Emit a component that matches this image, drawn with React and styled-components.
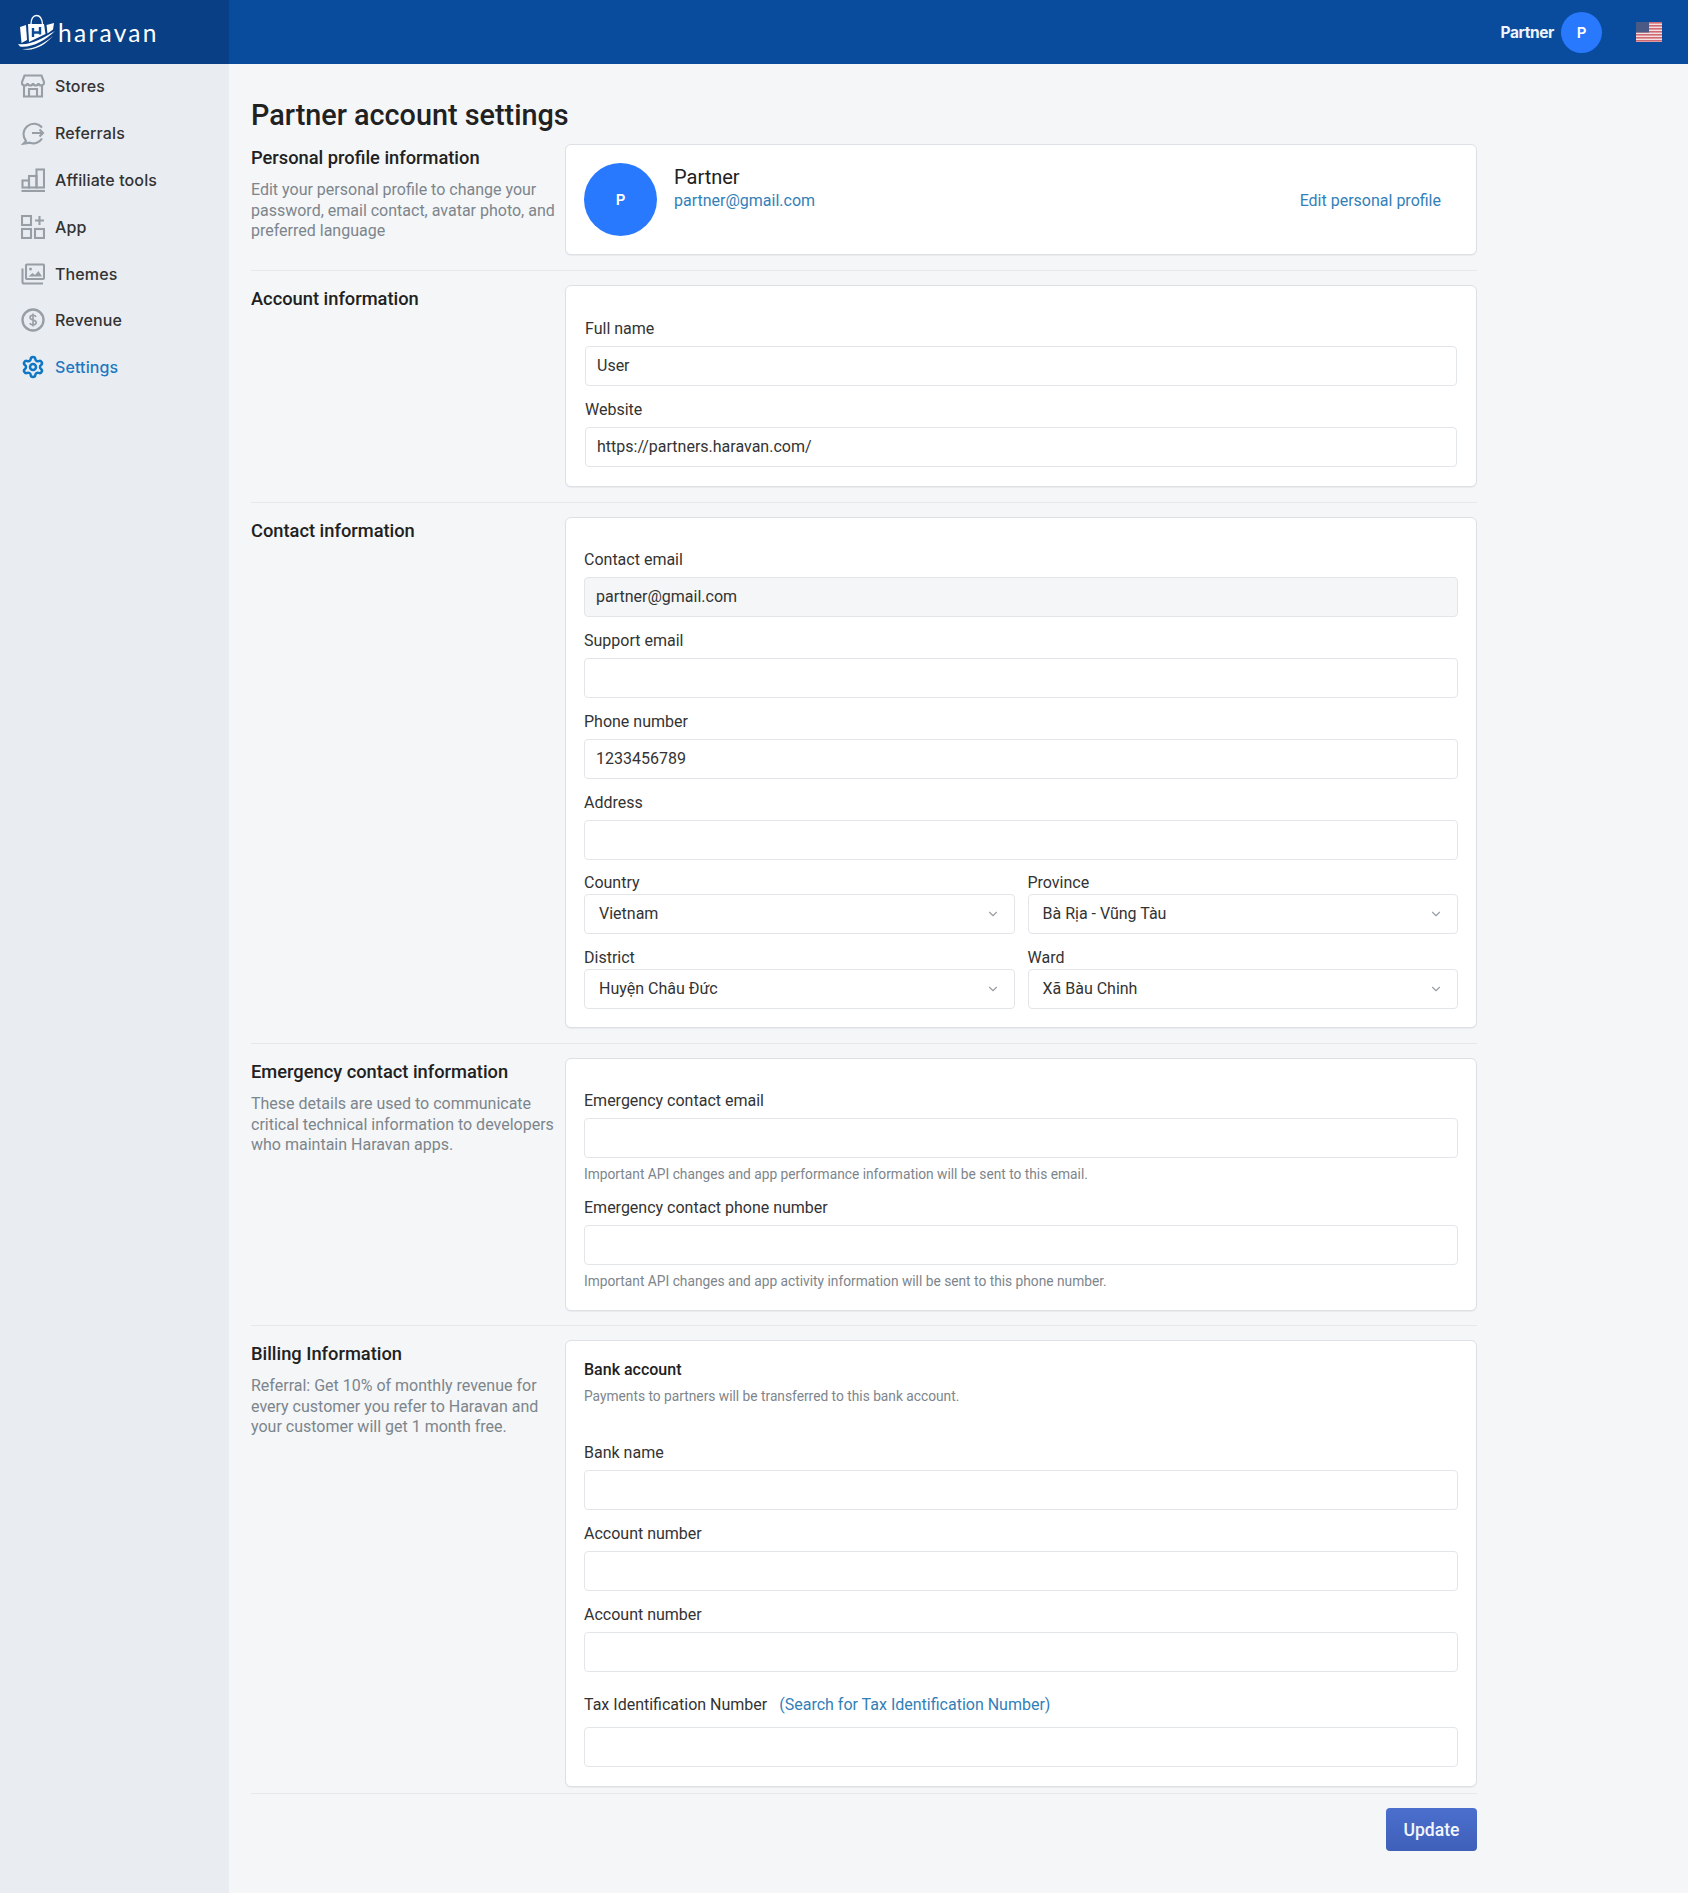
import React from "react";
import styled, { createGlobalStyle } from "styled-components";
import { ChevronDown, Settings } from "lucide-react";

const GlobalStyle = createGlobalStyle`
  html, body { margin: 0; padding: 0; background: #f4f6f8; }
  body { font-family: Roboto, "Liberation Sans", sans-serif; color: #333; }
  * { box-sizing: border-box; }
`;

const Page = styled.div`
  display: grid;
  grid-template-columns: 229px 1fr;
  grid-template-rows: 64px 1fr;
  width: 1688px;
  min-height: 1893px;
`;

const LogoBar = styled.div`
  background: #083f85;
  display: flex;
  align-items: center;
  padding-left: 17px;
  gap: 3px;
`;

const LogoText = styled.span`
  font-family: Lato, sans-serif;
  font-size: 24.5px;
  font-weight: 400;
  letter-spacing: 2.3px;
  color: #fff;
`;

const TopBar = styled.header`
  background: #094c9e;
  display: flex;
  align-items: center;
  justify-content: flex-end;
  padding-right: 26px;
`;

const TopName = styled.span`
  font-family: Inter, sans-serif;
  font-size: 15.5px;
  font-weight: 700;
  letter-spacing: -0.4px;
  color: #eef4fb;
  margin-right: 7px;
`;

const Avatar = styled.div`
  width: ${(p) => p.$size}px;
  height: ${(p) => p.$size}px;
  border-radius: 50%;
  background: #2979ff;
  color: #fff;
  flex: none;
  display: flex;
  align-items: center;
  justify-content: center;
  font-family: Inter, sans-serif;
  font-weight: 600;
  font-size: 15px;
`;

const Flag = styled.svg`
  margin-left: 34px;
  display: block;
`;

const Sidebar = styled.nav`
  background: #e9edf2;
`;

const NavItem = styled.a`
  display: flex;
  align-items: center;
  height: 46.8px;
  padding: 0 0 2px 21px;
  gap: 10px;
  font-family: Inter, sans-serif;
  font-size: 16px;
  font-weight: 500;
  letter-spacing: 0.12px;
  color: ${(p) => (p.$active ? "#1f78c1" : "#333")};
  svg { flex: none; color: ${(p) => (p.$active ? "#0f77c4" : "#979ea6")}; }
`;

const Main = styled.main`
  padding: 32px 0 0 22px;
  width: 1248px;
`;

const Title = styled.h1`
  margin: 0 0 10px;
  font-size: 28.8px;
  line-height: 38px;
  font-weight: 500;
  color: #212121;
`;

const Section = styled.section`
  display: grid;
  grid-template-columns: 314px 912px;
  padding-bottom: ${(p) => p.$pb ?? 15}px;
  margin-bottom: 14px;
  border-bottom: 1px solid #e6e9ec;
`;

const SectionInfo = styled.div`
  padding-top: 2px;
`;

const SectionTitle = styled.h2`
  margin: 0 0 10px;
  font-size: 18.3px;
  line-height: 24px;
  font-weight: 500;
  color: #212121;
`;

const SectionDesc = styled.p`
  margin: 0;
  font-size: 16px;
  line-height: 20.5px;
  color: #7d858c;
`;

const Card = styled.div`
  background: #fff;
  border: 1px solid #dde1e5;
  border-radius: 6px;
  padding: ${(p) => p.$pad ?? "30px 18px 20px 18px"};
  box-shadow: 0 1px 1px rgba(0, 0, 0, 0.05);
`;

const ProfileCard = styled(Card)`
  display: flex;
  align-items: center;
  height: 111px;
  padding: 0 35px 0 18px;
`;

const ProfileText = styled.div`
  margin-left: 17px;
  flex: 1;
  display: flex;
  flex-direction: column;
  padding-bottom: 23px;
`;

const ProfileName = styled.div`
  font-size: 20px;
  line-height: 25px;
  color: #212121;
`;

const LinkText = styled.a`
  font-size: 16px;
  line-height: 21px;
  color: #3380b8;
`;

const EditLink = styled(LinkText)`
  padding-top: 2px;
`;

const Field = styled.div`
  margin-bottom: ${(p) => p.$mb ?? 12}px;
  &:last-child { margin-bottom: 0; }
`;

const Label = styled.label`
  display: block;
  font-size: 16px;
  line-height: 21px;
  padding-top: 1px;
  margin-bottom: ${(p) => p.$mb ?? 7}px;
  color: #333;
`;

const SelectLabel = styled(Label)`
  padding-top: 0;
  margin-bottom: 1px;
`;

const Input = styled.input`
  display: block;
  width: 100%;
  height: 40px;
  padding: 0 11px 2px;
  font: 16px Roboto, sans-serif;
  color: #333;
  background: ${(p) => (p.readOnly && p.$muted ? "#f5f6f7" : "#fff")};
  border: 1px solid #e3e6e9;
  border-radius: 4px;
  outline: none;
`;

const SelectGrid = styled.div`
  display: grid;
  grid-template-columns: 1fr 1fr;
  column-gap: 13px;
  row-gap: 13px;
`;

const SelectBox = styled.div`
  display: flex;
  align-items: center;
  justify-content: space-between;
  height: 40px;
  padding: 0 14px 1px;
  font-size: 16px;
  background: #fff;
  border: 1px solid #e3e6e9;
  border-radius: 4px;
  svg { color: #9aa0a6; }
`;

const Help = styled.div`
  font-size: 13.75px;
  line-height: 18px;
  margin-top: 7px;
  color: #7d858c;
`;

const SubTitle = styled.div`
  font-size: 16px;
  line-height: 21px;
  font-weight: 500;
  color: #212121;
`;

const SubDesc = styled.div`
  font-size: 13.75px;
  line-height: 18px;
  margin: 7px 0 36px;
  color: #7d858c;
`;

const TaxLink = styled.a`
  margin-left: 12px;
  color: #3380b8;
`;

const Actions = styled.div`
  display: flex;
  justify-content: flex-end;
  width: 1226px;
  margin-top: 6px;
  margin-bottom: 40px;
`;

const UpdateButton = styled.button`
  width: 91px;
  height: 43px;
  border: none;
  border-radius: 4px;
  background: linear-gradient(#4b6fce, #3f60b9);
  color: #f2f5fc;
  font: 500 17.6px Roboto, sans-serif;
`;

const Ico = ({ children }) => (
  <svg width="24" height="24" viewBox="0 0 24 24" fill="none" stroke="currentColor" strokeWidth="2.1">
    {children}
  </svg>
);

const navItems = [
  {
    label: "Stores",
    icon: (
      <Ico>
        <path d="M3.500 1.500h17l2.500 6.500a2.800 2.800 0 0 1-5.500 1.200 2.800 2.800 0 0 1-5.500 0 2.800 2.800 0 0 1-5.500 0 2.800 2.800 0 0 1-5.500-1.200z" />
        <path d="M3 11v11.500h18V11" />
        <path d="M8 22.500V15h8v7.500" />
      </Ico>
    ),
  },
  {
    label: "Referrals",
    icon: (
      <Ico>
        <path d="M21 6.500A10 10 0 1 0 5 20l-2.500 2.700 6.500-1a10 10 0 0 0 12-4.200" />
        <path d="M11 12h11.500M18.500 8.500 22 12l-3.500 3.500" />
      </Ico>
    ),
  },
  {
    label: "Affiliate tools",
    icon: (
      <Ico>
        <path d="M0.500 23h23.500" strokeWidth="2.200" />
        <rect x="1.500" y="12.500" width="6.500" height="7" />
        <rect x="8" y="8" width="7.500" height="11.500" />
        <rect x="15.500" y="1.500" width="7.500" height="18" />
      </Ico>
    ),
  },
  {
    label: "App",
    icon: (
      <Ico>
        <rect x="1" y="1" width="9" height="9" />
        <rect x="1" y="14" width="9" height="9" />
        <rect x="14" y="14" width="9" height="9" />
        <path d="M18.500 1v9M14 5.500h9" />
      </Ico>
    ),
  },
  {
    label: "Themes",
    icon: (
      <Ico>
        <rect x="5" y="2.500" width="18" height="14.500" rx="1" />
        <path d="M1.500 6.500V20a1.500 1.500 0 0 0 1.500 1.500h19" />
        <circle cx="9.500" cy="7" r="1.500" fill="currentColor" stroke="none" />
        <path d="m7.500 14.500 4-3.500 2.500 2 3.500-4 3.500 5.500z" fill="currentColor" stroke="none" />
      </Ico>
    ),
  },
  {
    label: "Revenue",
    icon: (
      <Ico>
        <circle cx="12" cy="12" r="10.500" strokeWidth="2.400" />
        <path d="M15 8.800c-.5-1-1.500-1.600-3-1.600-1.800 0-3 1-3 2.300 0 3.300 6.200 1.700 6.200 5 0 1.400-1.300 2.300-3.200 2.300-1.600 0-2.700-.6-3.200-1.700M12 5.500v13" strokeWidth="1.600" />
      </Ico>
    ),
  },
  { label: "Settings", active: true, icon: <Settings size={24} strokeWidth={2.5} /> },
];

const HaravanMark = () => (
  <svg width="38" height="36" viewBox="0 0 38 36">
    <path d="M14 10c0-5 2-8.500 5.500-8.500S25 5 25.500 10" fill="none" stroke="#fff" strokeWidth="1.300" />
    <path d="M3 13l6-2 1 15-5.500 3z" fill="#fff" />
    <path d="M11 10h16l1.500 10-16.500 8z" fill="#fff" />
    <path d="M16 14v9M23 13v7.500M16 18.500h7" fill="none" stroke="#0a4a97" strokeWidth="2.400" />
    <path d="M29.500 11l7.500-2-1 6.500-5.500 4z" fill="#fff" />
    <path d="M1 30c12 2 25-6 37-13-10 10-24 17-35 15.500z" fill="#fff" />
    <path d="M5 35c11 1 23-6 31-13-8 9-19 16-31 13z" fill="#fff" />
  </svg>
);

const USFlag = () => (
  <Flag width="26" height="20" viewBox="0 0 26 20">
    <rect width="26" height="20" fill="#f3dfe0" />
    {[0, 3, 6, 9, 12, 15, 18].map((y) => (
      <rect key={y} y={y} width="26" height="1.600" fill="#cf6a72" />
    ))}
    <rect width="13" height="10.500" fill="#4a5a85" />
  </Flag>
);

const TextField = ({ label, value, muted, help, mb, labelMb, labelExtra }) => (
  <Field $mb={mb}>
    <Label $mb={labelMb}>
      {label}
      {labelExtra}
    </Label>
    <Input readOnly value={value ?? ""} $muted={muted} />
    {help && <Help>{help}</Help>}
  </Field>
);

const SelectField = ({ label, value }) => (
  <div>
    <SelectLabel>{label}</SelectLabel>
    <SelectBox>
      {value}
      <ChevronDown size={14} />
    </SelectBox>
  </div>
);

const App = () => {
  return (
    <>
      <GlobalStyle />
      <Page>
        <LogoBar>
          <HaravanMark />
          <LogoText>haravan</LogoText>
        </LogoBar>
        <TopBar>
          <TopName>Partner</TopName>
          <Avatar $size={41}>P</Avatar>
          <USFlag />
        </TopBar>
        <Sidebar>
          {navItems.map((item) => (
            <NavItem key={item.label} $active={item.active}>
              {item.icon}
              {item.label}
            </NavItem>
          ))}
        </Sidebar>
        <Main>
          <Title>Partner account settings</Title>

          <Section>
            <SectionInfo>
              <SectionTitle>Personal profile information</SectionTitle>
              <SectionDesc>
                Edit your personal profile to change your password, email contact, avatar photo, and
                preferred language
              </SectionDesc>
            </SectionInfo>
            <ProfileCard>
              <Avatar $size={73}>P</Avatar>
              <ProfileText>
                <ProfileName>Partner</ProfileName>
                <LinkText>partner@gmail.com</LinkText>
              </ProfileText>
              <EditLink>Edit personal profile</EditLink>
            </ProfileCard>
          </Section>

          <Section>
            <SectionInfo>
              <SectionTitle>Account information</SectionTitle>
            </SectionInfo>
            <Card $pad="31px 19px 19px 19px">
              <TextField label="Full name" value="User" />
              <TextField label="Website" value="https://partners.haravan.com/" />
            </Card>
          </Section>

          <Section>
            <SectionInfo>
              <SectionTitle>Contact information</SectionTitle>
            </SectionInfo>
            <Card $pad="30px 18px 18px 18px">
              <TextField label="Contact email" value="partner@gmail.com" muted />
              <TextField label="Support email" />
              <TextField label="Phone number" value="1233456789" />
              <TextField label="Address" mb={12} />
              <SelectGrid>
                <SelectField label="Country" value="Vietnam" />
                <SelectField label="Province" value="Bà Rịa - Vũng Tàu" />
                <SelectField label="District" value="Huyện Châu Đức" />
                <SelectField label="Ward" value="Xã Bàu Chinh" />
              </SelectGrid>
            </Card>
          </Section>

          <Section $pb={14}>
            <SectionInfo>
              <SectionTitle>Emergency contact information</SectionTitle>
              <SectionDesc>
                These details are used to communicate critical technical information to developers
                who maintain Haravan apps.
              </SectionDesc>
            </SectionInfo>
            <Card>
              <TextField
                label="Emergency contact email"
                mb={13}
                help="Important API changes and app performance information will be sent to this email."
              />
              <TextField
                label="Emergency contact phone number"
                help="Important API changes and app activity information will be sent to this phone number."
              />
            </Card>
          </Section>

          <Section $pb={6}>
            <SectionInfo>
              <SectionTitle>Billing Information</SectionTitle>
              <SectionDesc>
                Referral: Get 10% of monthly revenue for every customer you refer to Haravan and
                your customer will get 1 month free.
              </SectionDesc>
            </SectionInfo>
            <Card $pad="18px 18px 19px 18px">
              <SubTitle>Bank account</SubTitle>
              <SubDesc>Payments to partners will be transferred to this bank account.</SubDesc>
              <TextField label="Bank name" />
              <TextField label="Account number" />
              <TextField label="Account number" mb={21} />
              <TextField
                label="Tax Identification Number"
                labelMb={12}
                labelExtra={<TaxLink>(Search for Tax Identification Number)</TaxLink>}
              />
            </Card>
          </Section>

          <Actions>
            <UpdateButton>Update</UpdateButton>
          </Actions>
        </Main>
      </Page>
    </>
  );
};

export default App;
